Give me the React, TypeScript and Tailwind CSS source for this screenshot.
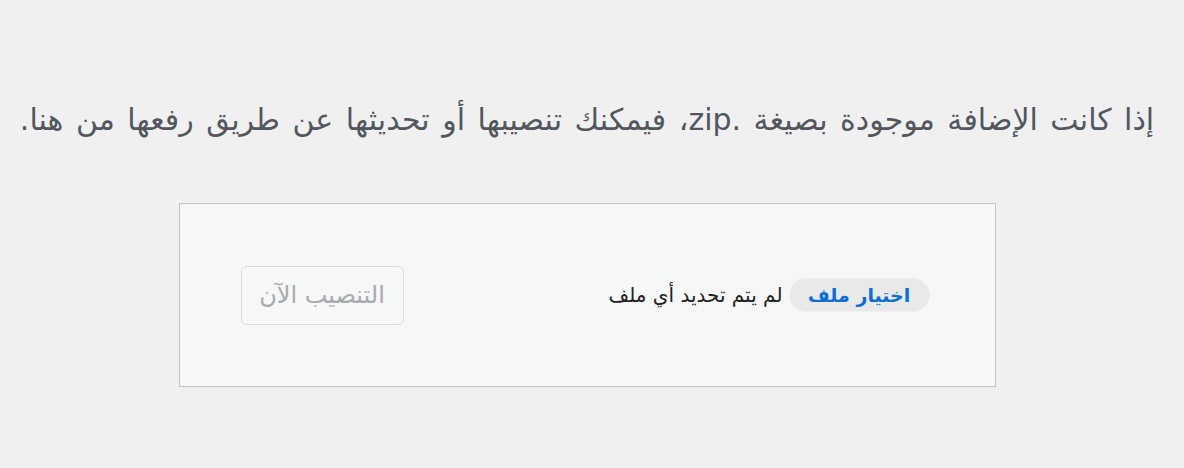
export default function App() {
  return (
    <div dir="rtl" className="min-h-screen bg-[#f0f0f1] font-['DejaVu_Sans',sans-serif]" style={{ height: 468 }}>
      <div className="mr-[10px] w-[1174px]">
        <p className="pt-[100px] text-center text-[30px] leading-[40px] text-[#50575e] [word-spacing:3px]">
          إذا كانت الإضافة موجودة بصيغة .zip، فيمكنك تنصيبها أو تحديثها عن طريق رفعها من هنا.
        </p>
        <form className="mx-auto mt-[63px] flex h-[184px] w-[817px] items-center justify-between border border-[#c3c4c7] bg-[#f6f7f7] pl-[61px] pr-[65px]">
          <div className="flex items-center gap-[6px]">
            <span className="flex h-[34px] w-[141px] items-center justify-center rounded-full border border-[#f0f0f0] bg-[#e9e9ea] text-[19px] font-bold text-[#0b6fd6]">
              اختيار ملف
            </span>
            <span className="text-[20px] text-[#222]">لم يتم تحديد أي ملف</span>
          </div>
          <button
            type="button"
            disabled
            className="h-[59px] w-[163px] rounded-[5px] border border-[#dcdcde] bg-[#f6f7f7] text-[24px] text-[#a7aaad]"
          >
            التنصيب الآن
          </button>
        </form>
      </div>
    </div>
  )
}
